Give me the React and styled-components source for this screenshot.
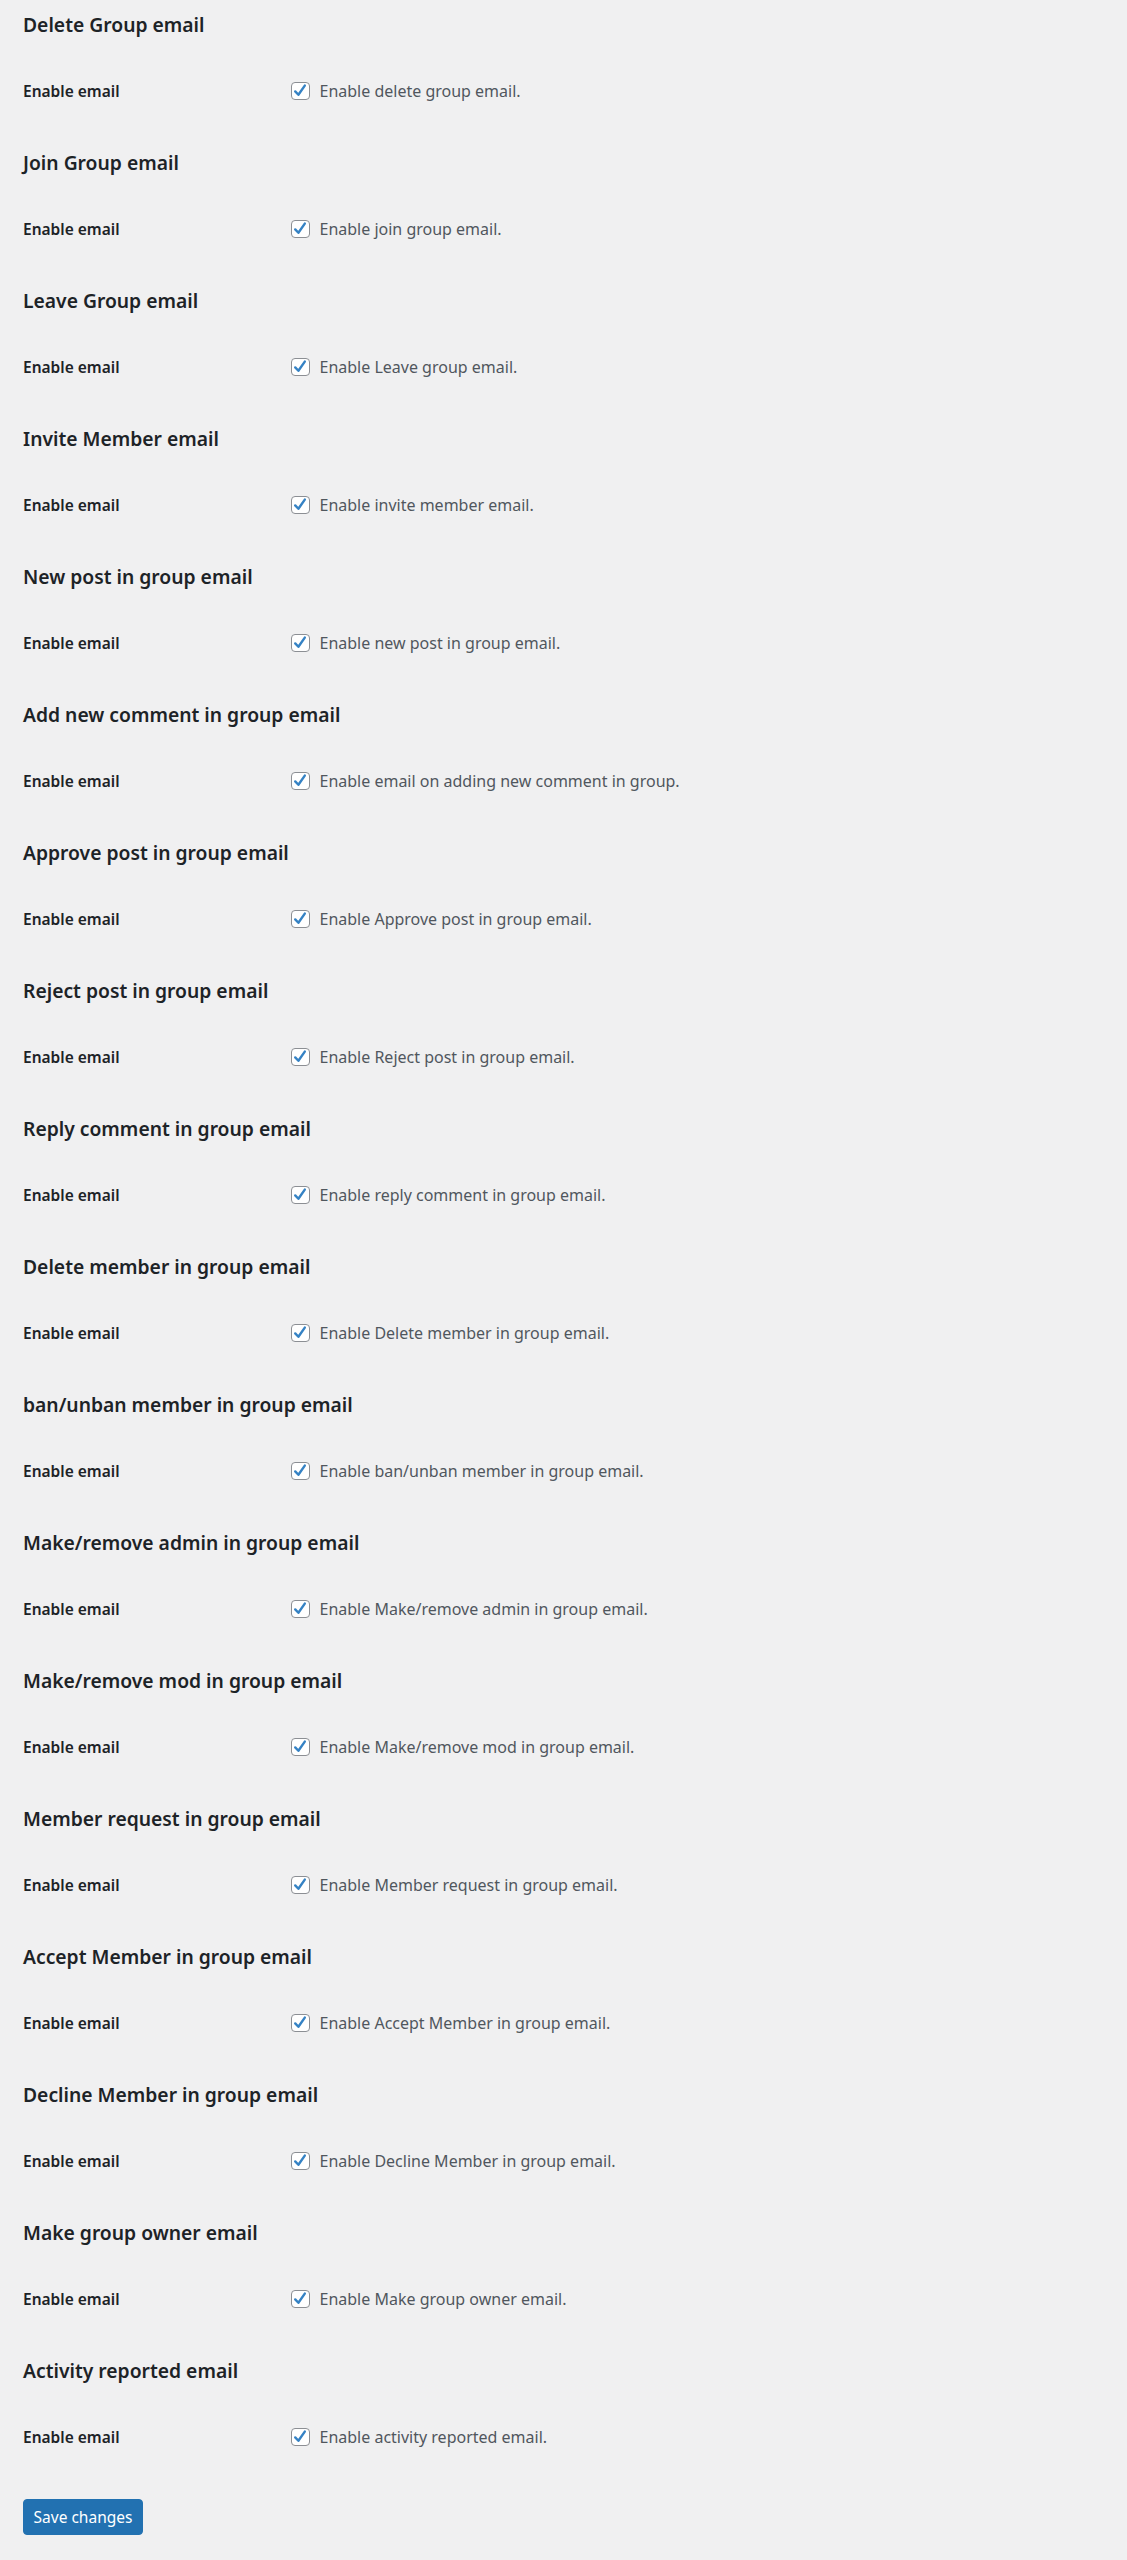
import React from 'react'
import styled, { createGlobalStyle } from 'styled-components'

const sections = [
  ['Delete Group email', 'Enable delete group email.'],
  ['Join Group email', 'Enable join group email.'],
  ['Leave Group email', 'Enable Leave group email.'],
  ['Invite Member email', 'Enable invite member email.'],
  ['New post in group email', 'Enable new post in group email.'],
  ['Add new comment in group email', 'Enable email on adding new comment in group.'],
  ['Approve post in group email', 'Enable Approve post in group email.'],
  ['Reject post in group email', 'Enable Reject post in group email.'],
  ['Reply comment in group email', 'Enable reply comment in group email.'],
  ['Delete member in group email', 'Enable Delete member in group email.'],
  ['ban/unban member in group email', 'Enable ban/unban member in group email.'],
  ['Make/remove admin in group email', 'Enable Make/remove admin in group email.'],
  ['Make/remove mod in group email', 'Enable Make/remove mod in group email.'],
  ['Member request in group email', 'Enable Member request in group email.'],
  ['Accept Member in group email', 'Enable Accept Member in group email.'],
  ['Decline Member in group email', 'Enable Decline Member in group email.'],
  ['Make group owner email', 'Enable Make group owner email.'],
  ['Activity reported email', 'Enable activity reported email.'],
]

const GlobalStyle = createGlobalStyle`
  body {
    margin: 0;
    background: #f0f0f1;
    font-family: "Noto Sans", "Open Sans", sans-serif;
    color: #1d2327;
  }
`

const Page = styled.form`
  padding: 13px 23px 40px;
`

const Section = styled.section`
  height: 138px;
`

const Heading = styled.h2`
  margin: 0;
  font-size: 19.3px;
  line-height: 24px;
  font-weight: 600;
  color: #1d2327;
`

const Row = styled.div`
  display: grid;
  grid-template-columns: 268px 1fr;
  align-items: center;
  margin-top: 42px;
  height: 24px;
`

const Label = styled.div`
  font-size: 15.5px;
  font-weight: 600;
  color: #1d2327;
`

const Option = styled.label`
  display: flex;
  align-items: center;
  gap: 10px;
  font-size: 16px;
  color: #50575e;
`

const Box = styled.span`
  width: 18.5px;
  height: 18.5px;
  box-sizing: border-box;
  border: 1px solid #8c8f94;
  border-radius: 4px;
  background: #fff;
  display: flex;
  align-items: center;
  justify-content: center;
`

const SaveButton = styled.button`
  margin-top: 2px;
  width: 120px;
  height: 36px;
  background: #2271b1;
  border: 1px solid #2271b1;
  border-radius: 4px;
  color: #fff;
  font-family: "Noto Sans", "Open Sans", sans-serif;
  font-size: 15.5px;
  padding: 0;
`

function Check() {
  return (
    <Box>
      <svg width="16" height="16" viewBox="0 0 16 16">
        <path d="M3.2 8.4 L6.4 11.8 L12.8 2.6" fill="none" stroke="#3582c4" strokeWidth="2.4" strokeLinecap="round" strokeLinejoin="round" />
      </svg>
    </Box>
  )
}

export default function App() {
  return (
    <>
      <GlobalStyle />
      <Page onSubmit={(e) => e.preventDefault()}>
        {sections.map(([title, text]) => (
          <Section key={title}>
            <Heading>{title}</Heading>
            <Row>
              <Label>Enable email</Label>
              <Option>
                <Check />
                {text}
              </Option>
            </Row>
          </Section>
        ))}
        <SaveButton type="submit">Save changes</SaveButton>
      </Page>
    </>
  )
}
